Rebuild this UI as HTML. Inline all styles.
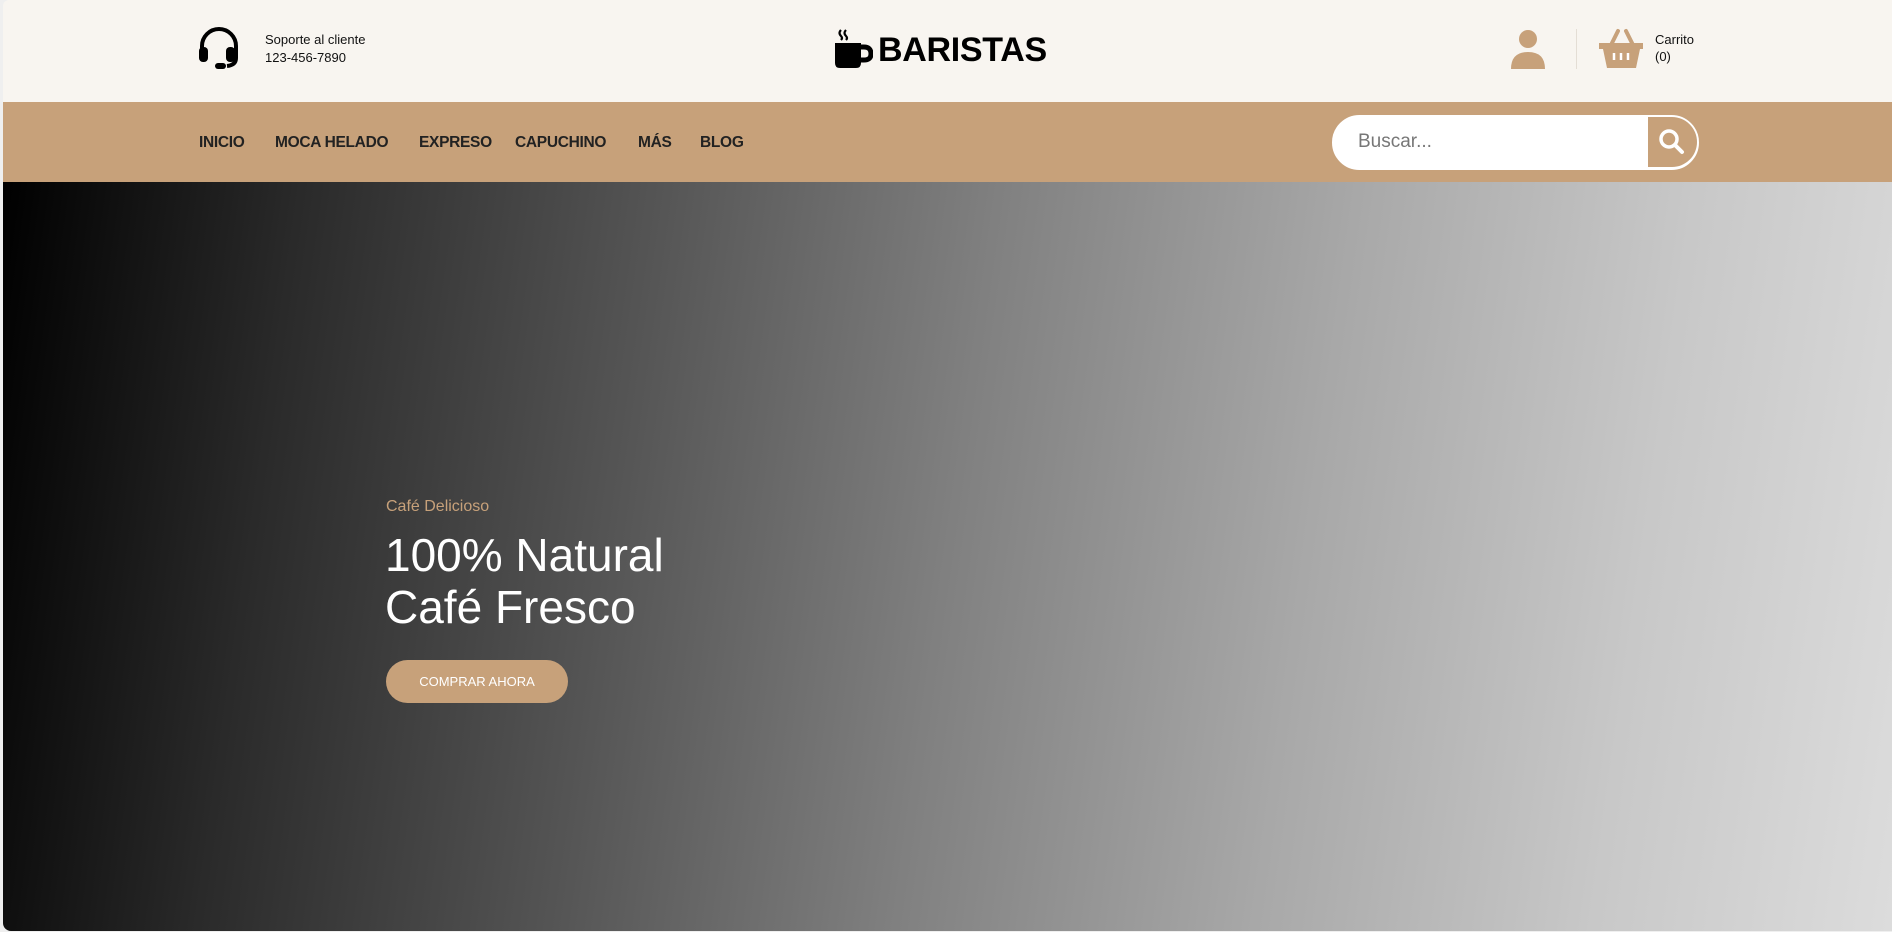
<!DOCTYPE html>
<html><head><meta charset="utf-8"><style>
*{margin:0;padding:0;box-sizing:border-box}
body{width:1892px;height:932px;background:#efefef;font-family:"Liberation Sans",sans-serif;position:relative;overflow:hidden}
.hdr{position:absolute;left:3px;top:0;width:1889px;height:102px;background:#f8f5f0;border-top-left-radius:6px}
.nav{position:absolute;left:3px;top:102px;width:1889px;height:80px;background:#c7a17a}
.hero{position:absolute;left:3px;top:182px;width:1889px;height:749px;background:linear-gradient(98deg,#000 0%,#2a2a2a 15%,#555 33%,#808080 50%,#a8a8a8 68%,#c8c8c8 85%,#dcdcdc 100%);border-bottom-left-radius:8px}
.a{position:absolute;white-space:nowrap}
.navi{position:absolute;top:134px;font-size:15.5px;font-weight:bold;color:#222;letter-spacing:-0.3px}
</style></head><body>
<div class="hdr"></div><div class="nav"></div><div class="hero"></div>

<svg class="a" style="left:197px;top:27px" width="46" height="44" viewBox="0 0 46 44">
<path d="M5 24 V19 A17 17 0 0 1 39 19 V31 Q39 38 30 39" fill="none" stroke="#000" stroke-width="4"/>
<rect x="2" y="20" width="9" height="15" rx="4" fill="#000"/>
<rect x="29" y="20" width="9" height="15" rx="4" fill="#000"/>
<rect x="18" y="36" width="11" height="6" rx="3" fill="#000"/>
</svg>
<div class="a" style="left:265px;top:32px;font-size:13px;color:#111">Soporte al cliente</div>
<div class="a" style="left:265px;top:50px;font-size:13px;color:#111">123-456-7890</div>

<svg class="a" style="left:833px;top:29px" width="40" height="40" viewBox="0 0 40 40">
<path d="M8 1 Q5 4 8 7 Q10 9 8 11 M13 1 Q10 4 13 7 Q15 9 13 11" fill="none" stroke="#000" stroke-width="2.2"/>
<path d="M2 14 H28 V34 Q28 39 23 39 H7 Q2 39 2 34 Z" fill="#000"/>
<path d="M28 18 H31 Q38 18 38 25 Q38 31 31 31 H28" fill="none" stroke="#000" stroke-width="5"/>
</svg>
<div class="a" style="left:878px;top:31px;font-size:34px;font-weight:bold;color:#000;letter-spacing:-0.3px">BARISTAS</div>

<svg class="a" style="left:1509px;top:29px" width="38" height="40" viewBox="0 0 38 40">
<circle cx="19" cy="10" r="9" fill="#c7a17a"/>
<path d="M2 40 Q2 23 19 23 Q36 23 36 40 Z" fill="#c7a17a"/>
</svg>
<div class="a" style="left:1576px;top:29px;width:1px;height:40px;background:#e4ded5"></div>
<svg class="a" style="left:1599px;top:28px" width="46" height="42" viewBox="0 0 46 42">
<path d="M12 17 L19 3 M34 17 L27 3" stroke="#c7a17a" stroke-width="4" stroke-linecap="round"/>
<path d="M0 15 H44 V21 H41 L37 40 H8 L4 21 H0 Z" fill="#c7a17a"/>
<path d="M15 25 V32 M22 25 V32 M29 25 V32" stroke="#fff" stroke-width="2.5"/>
</svg>
<div class="a" style="left:1655px;top:32px;font-size:13px;color:#111">Carrito</div>
<div class="a" style="left:1655px;top:49px;font-size:13px;color:#111">(0)</div>

<div class="navi" style="left:199px">INICIO</div>
<div class="navi" style="left:275px">MOCA HELADO</div>
<div class="navi" style="left:419px">EXPRESO</div>
<div class="navi" style="left:515px">CAPUCHINO</div>
<div class="navi" style="left:638px">MÁS</div>
<div class="navi" style="left:700px">BLOG</div>

<div class="a" style="left:1332px;top:115px;width:367px;height:55px;background:#fff;border-radius:28px;border:1.5px solid #fff;overflow:hidden">
<div class="a" style="left:25px;top:15px;font-size:19px;color:#777">Buscar...</div>
<div class="a" style="right:0;top:0;width:50px;height:52px;background:#c7a17a;border-radius:0 26px 26px 0;border:1.5px solid #fff;border-left:none"></div>
</div>
<svg class="a" style="left:1658px;top:128px" width="28" height="28" viewBox="0 0 28 28">
<circle cx="11" cy="11" r="8" fill="none" stroke="#fff" stroke-width="3.5"/>
<path d="M17 17 L24 24" stroke="#fff" stroke-width="4" stroke-linecap="round"/>
</svg>

<div class="a" style="left:386px;top:498px;font-size:16px;color:#c7a17a">Café Delicioso</div>
<div class="a" style="left:385px;top:529px;font-size:46px;line-height:52px;color:#fff">100% Natural<br>Café Fresco</div>
<div class="a" style="left:386px;top:660px;width:182px;height:43px;background:#c7a17a;border-radius:22px;color:#fff;font-size:13px;text-align:center;line-height:43px">COMPRAR AHORA</div>
</body></html>
